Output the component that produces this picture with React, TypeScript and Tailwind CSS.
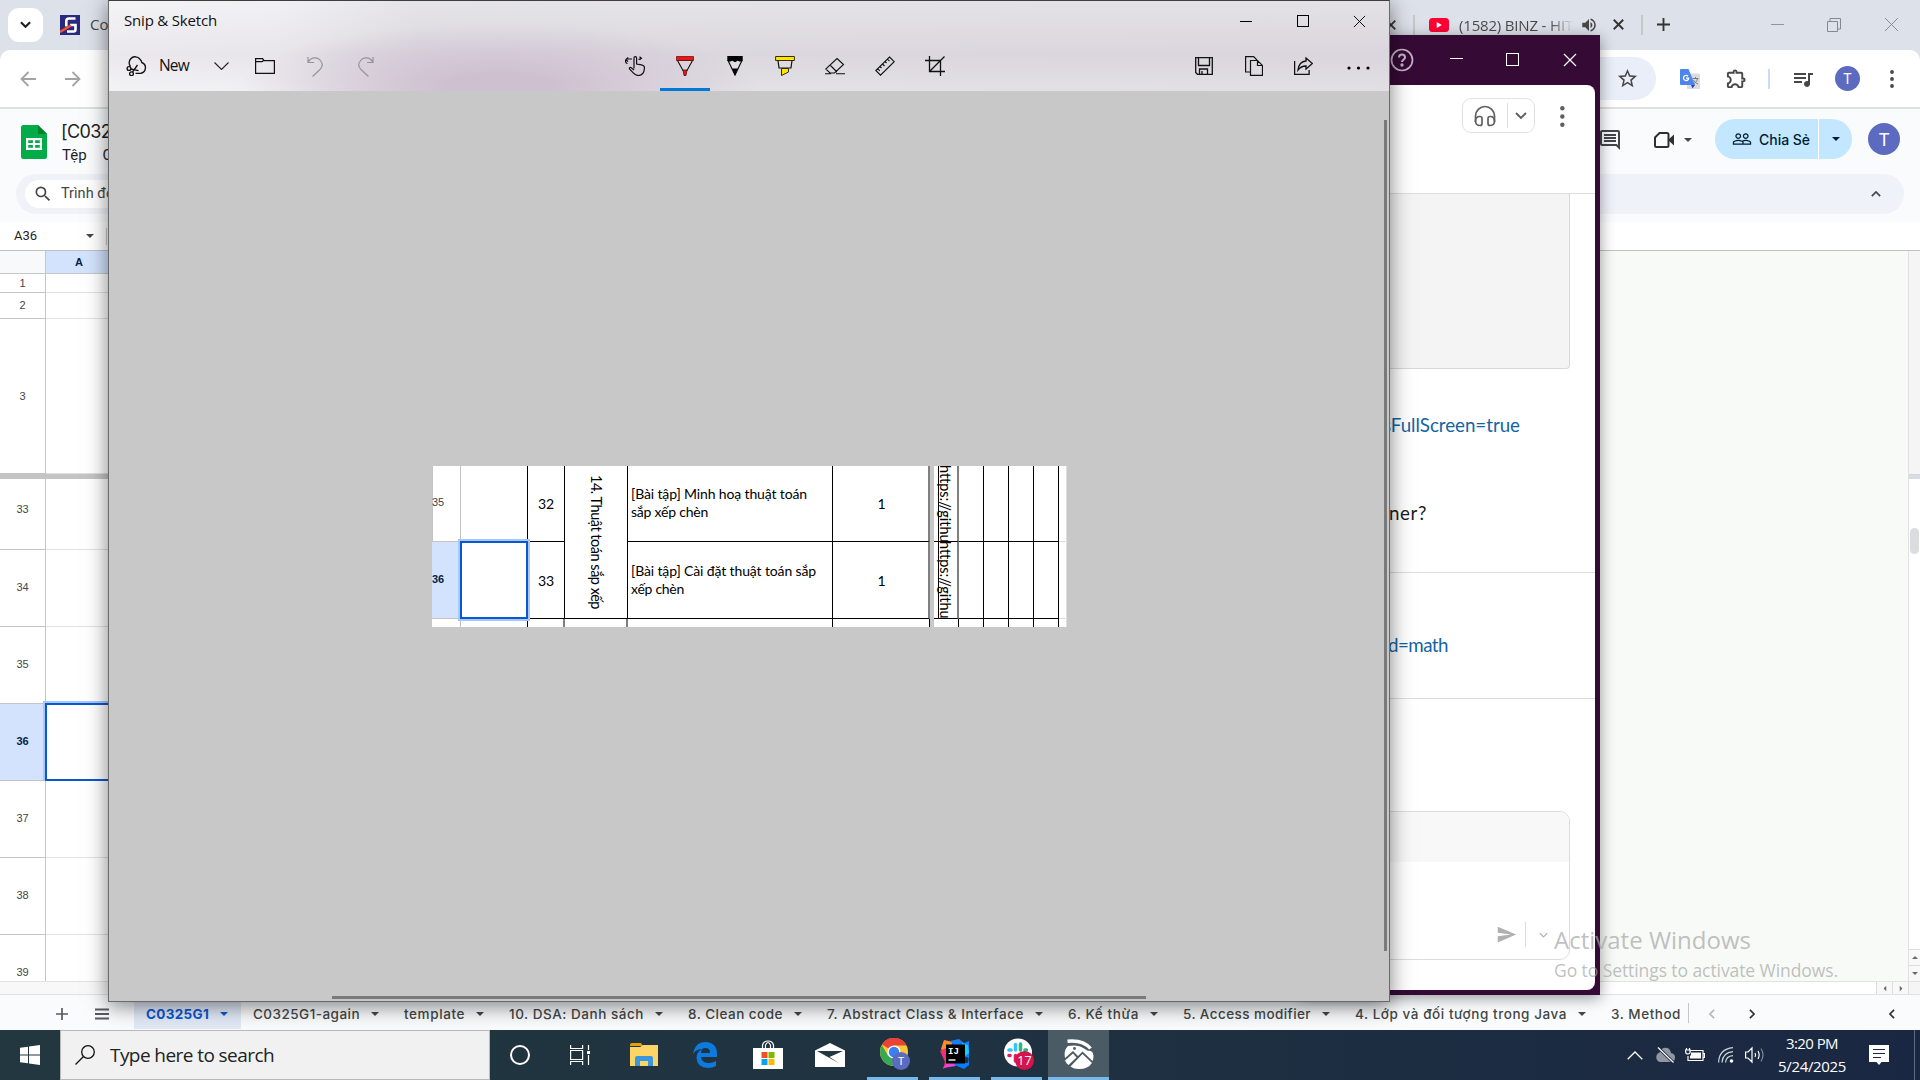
import React, { useLayoutEffect, useRef, useState } from 'react';
import { MdOutlineComment, MdOutlineStarBorder, MdOutlineExtension, MdOutlineQueueMusic, MdPeopleOutline, MdSend, MdVolumeUp, MdSearch } from 'react-icons/md';

/** Single-line text whose tracking is adjusted so that it fills `w` pixels. */
function Run({ w, className = '', children }: { w: number; className?: string; children: string }) {
  const ref = useRef<HTMLSpanElement>(null);
  const [spacing, setSpacing] = useState(0);
  useLayoutEffect(() => {
    const el = ref.current;
    if (el) setSpacing((w - el.getBoundingClientRect().width) / children.length);
  }, [w, children]);
  return (
    <span ref={ref} className={`inline-block shrink-0 whitespace-pre ${className}`} style={{ letterSpacing: `${spacing}px` }}>
      {children}
    </span>
  );
}

/** Vertical counterpart of Run: fills `h` pixels. */
function VRun({ h, children }: { h: number; children: string }) {
  const ref = useRef<HTMLSpanElement>(null);
  const [spacing, setSpacing] = useState(0);
  useLayoutEffect(() => {
    const el = ref.current;
    if (el) setSpacing((h - el.getBoundingClientRect().height) / children.length);
  }, [h, children]);
  return <span ref={ref} className="inline-block whitespace-pre" style={{ letterSpacing: `${spacing}px` }}>{children}</span>;
}

type P = { className?: string };
const Caret = ({ className = '' }: P) => (
  <svg viewBox="0 0 8 4" className={`h-1 w-2 shrink-0 ${className}`} fill="currentColor"><path d="M0 0h8L4 4z" /></svg>
);
const Chevron = ({ className = '', d = 'M1 1l5 5 5-5', vb = '0 0 12 7', sw = 2 }: P & { d?: string; vb?: string; sw?: number }) => (
  <svg viewBox={vb} className={`shrink-0 ${className}`} fill="none" stroke="currentColor" strokeWidth={sw}><path d={d} /></svg>
);
const Cross = ({ className = '', sw = 1 }: P & { sw?: number }) => (
  <svg viewBox="0 0 14 14" className={`shrink-0 ${className}`} fill="none" stroke="currentColor" strokeWidth={sw}><path d="M1 1l12 12M13 1L1 13" /></svg>
);
const Dots = ({ className = '' }: P) => (
  <svg viewBox="0 0 4 18" className={`h-[18px] w-1 shrink-0 ${className}`} fill="currentColor"><circle cx="2" cy="2" r="1.9" /><circle cx="2" cy="9" r="1.9" /><circle cx="2" cy="16" r="1.9" /></svg>
);

function TabStrip() {
  return (
    <div className="flex h-[50px] items-center bg-[#dde1e9] pb-px text-[#474747]">
      <div className="ml-2 flex h-[34px] w-[35px] shrink-0 items-center justify-center rounded-[11px] bg-white text-[#1f1f1f]">
        <Chevron className="h-[7px] w-[11px]" sw={2.3} />
      </div>
      <svg viewBox="0 0 20 20" className="ml-[17px] h-5 w-5 shrink-0">
        <rect width="20" height="20" fill="#29297f" />
        <path d="M15.500 3.500H9Q6.300 3.500 6.300 6v5.500M7 16.500h6.500q2 0 2-2V10H10" fill="none" stroke="#fff" strokeWidth="2.600" />
        <path d="M0 17L11 10.500" stroke="#f1562b" strokeWidth="2.400" />
      </svg>
      <span className="ml-2.5 w-6 shrink-0 whitespace-nowrap text-[15px]">Co</span>
      <Cross className="ml-[1272px] h-2.5 w-2.5 text-[#333]" sw={2.4} />
      <div className="ml-[17px] h-5 w-0.5 shrink-0 bg-[#c7c7c9]" />
      <svg viewBox="0 0 20 14" className="ml-[14px] h-3.5 w-5 shrink-0"><rect width="20" height="14" rx="3.500" fill="#f03" /><path d="M7.700 4v6l5.200-3z" fill="#fff" /></svg>
      <div className="ml-2.5 w-[114px] shrink-0 bg-gradient-to-r from-[#474747] from-80% to-transparent bg-clip-text text-transparent">
        <Run w={114} className="text-[15px]">(1582) BINZ - HIT</Run>
      </div>
      <MdVolumeUp className="ml-[7px] h-[18px] w-[18px] shrink-0" />
      <Cross className="ml-[15px] h-[11px] w-[11px] text-[#333]" sw={2.4} />
      <div className="ml-[17px] h-5 w-0.5 shrink-0 bg-[#c7c7c9]" />
      <svg viewBox="0 0 14 14" className="ml-[14px] h-[13px] w-[13px] shrink-0" stroke="#333" strokeWidth="2"><path d="M7 0v14M0 7h14" /></svg>
      <div className="ml-[101px] h-px w-[13px] shrink-0 bg-[#929499]" />
      <svg viewBox="0 0 14 14" className="ml-[43px] h-3.5 w-3.5 shrink-0" fill="none" stroke="#85888d"><path d="M.5 3.500h10v10H.5zM3 3V.5h10.500V11H11" /></svg>
      <Cross className="ml-[43px] h-[15px] w-[15px] text-[#85888d]" sw={0.9} />
    </div>
  );
}

function AddressBar() {
  return (
    <div className="bg-[#dde1e9]">
      <div className="flex h-[59px] items-center rounded-t-[10px] border-b-2 border-[#dfe1dd] bg-white text-[#474747]">
        <svg viewBox="0 0 16 16" className="ml-5 h-4 w-4 shrink-0" fill="none" stroke="#a3a3a3" strokeWidth="1.800"><path d="M16 8H1.500M8.500 1L1.500 8l7 7" /></svg>
        <svg viewBox="0 0 16 16" className="ml-[29px] h-4 w-4 shrink-0" fill="none" stroke="#a3a3a3" strokeWidth="1.800"><path d="M0 8h14.500M7.500 1l7 7-7 7" /></svg>
        <div className="ml-[119px] flex h-[43px] w-[1456px] shrink-0 items-center justify-end rounded-full bg-[#e9eef8] pr-[17px]">
          <MdOutlineStarBorder className="h-[23px] w-[23px]" />
        </div>
        <svg viewBox="0 0 20 20" className="ml-6 h-5 w-5 shrink-0">
          <rect x="7" y="4.500" width="13" height="15.500" rx="1" fill="#dcdcdc" />
          <path d="M1 0h7.500L15 16H1a1 1 0 01-1-1V1a1 1 0 011-1z" fill="#4a86ee" />
          <path d="M11 16h4l-2.500 3.500z" fill="#2149b8" />
          <path d="M8 7.200a2.600 2.600 0 10.700 1.900H6" fill="none" stroke="#fff" strokeWidth="1.300" />
          <path d="M12.500 9.500h6M15.500 8v1.500M17.500 9.500c-.5 3-2.500 4.500-4 5.500M13.500 11c1 2 3 3.500 4.500 4" fill="none" stroke="#6f7f8f" />
        </svg>
        <MdOutlineExtension className="ml-[25px] h-[23px] w-[23px] shrink-0" />
        <div className="ml-5 h-5 w-0.5 shrink-0 bg-[#c9dafc]" />
        <MdOutlineQueueMusic className="ml-[21px] h-[24px] w-[24px] shrink-0" />
        <div className="ml-5 flex h-[25px] w-[25px] shrink-0 items-center justify-center rounded-full bg-[#5c6bc0] font-['Roboto',sans-serif] text-sm text-white">T</div>
        <Dots className="ml-[30px]" />
      </div>
    </div>
  );
}

function SheetHeader() {
  return (
    <div className="h-[113px] bg-[#f9fbfd]">
      <div className="flex h-[65px] items-start">
        <svg viewBox="0 0 26 34" className="ml-[21px] mt-4 h-[34px] w-[26px] shrink-0">
          <path d="M2.500 0H17l9 9v22.500a2.500 2.500 0 01-2.500 2.500h-21A2.500 2.500 0 010 31.500v-29A2.500 2.500 0 012.500 0z" fill="#00ac47" />
          <path d="M17 0l9 9h-9z" fill="#00832d" />
          <path d="M5 13h16v12H5zm2.200 2.200v2.700h4.700v-2.700zm6.900 0v2.700h4.700v-2.700zm-6.900 4.900v2.700h4.700v-2.700zm6.900 0v2.700h4.700v-2.700z" fill="#fff" fillRule="evenodd" />
        </svg>
        <div className="ml-3.5 mt-[11px] w-[60px] shrink-0 whitespace-nowrap font-['Inter',sans-serif] text-[#1f1f1f]">
          <Run w={50} className="text-[18px] leading-[24px]">[C032</Run>
          <div className="-mt-px flex gap-4 pl-px font-['Roboto',sans-serif] text-[15px] leading-[24px]"><span>Tệp</span><span>C</span></div>
        </div>
        <MdOutlineComment className="ml-[1477px] mt-[19px] h-6 w-6 shrink-0 text-[#444746]" />
        <svg viewBox="0 0 20 16" className="ml-[32px] mt-[23px] h-4 w-5 shrink-0 text-[#303030]"><path d="M5.500 1H13a1.500 1.500 0 011.500 1.500v11A1.500 1.500 0 0113 15H2.500A1.500 1.500 0 011 13.500v-8z" fill="none" stroke="currentColor" strokeWidth="2" /><path d="M14 8l6-5.500v11z" fill="currentColor" /></svg>
        <Caret className="ml-2.5 mt-[29px] text-[#444746]" />
        <div className="ml-[23px] mt-2.5 flex h-10 w-[104px] shrink-0 items-center rounded-l-full border-r border-white bg-[#c2e7ff] pl-[17px] text-[#001d35]">
          <MdPeopleOutline className="h-5 w-5" />
          <Run w={51} className="ml-[7px] font-['Inter',sans-serif] text-[14px] font-medium">Chia Sẻ</Run>
        </div>
        <div className="mt-2.5 flex h-10 w-[33px] shrink-0 items-center justify-center rounded-r-full bg-[#c2e7ff] text-[#001d35]"><Caret /></div>
        <div className="ml-4 mt-3.5 flex h-8 w-8 shrink-0 items-center justify-center rounded-full bg-[#5c6bc0] font-['Roboto',sans-serif] text-[18px] text-white">T</div>
      </div>
      <div className="mx-4 flex h-10 items-center justify-between rounded-full bg-[#eff3f9] pl-[9px] pr-[23px]">
        <div className="flex h-7 w-[200px] items-center rounded-full bg-white pl-2 text-[#444746]">
          <MdSearch className="h-5 w-5" />
          <span className="-mt-px ml-2 whitespace-nowrap font-['Roboto',sans-serif] text-[14.5px]">Trình đơn</span>
        </div>
        <Chevron className="h-1.5 w-2.5 text-[#444746]" d="M1 6l5-5 5 5" />
      </div>
    </div>
  );
}

const sheetRows: [string, string][] = [
  ['1', 'h-[19px]'], ['2', 'h-[26px]'], ['3', 'h-[155px]'], ['|', 'h-[5px]'],
  ['33', 'h-[71px]'], ['34', 'h-[77px]'], ['35', 'h-[77px]'], ['36', 'h-[77px]'],
  ['37', 'h-[77px]'], ['38', 'h-[77px]'], ['39', 'h-[77px]'],
];

function Grid() {
  return (
    <div className="flex h-[731px] border-b border-[#e1e3e1]">
      <div className="h-[730px] w-[200px] shrink-0 overflow-hidden font-['Liberation_Sans',sans-serif] text-[11px] text-[#444746]">
        <div className="flex h-[23px] border-b border-[#c4c7c5]">
          <div className="w-[46px] border-r border-[#c4c7c5] bg-[#f8f9fa]" />
          <div className="w-[66px] bg-[#d3e3fd] text-center font-bold leading-[23px] text-[#041e49]">A</div>
          <div className="grow bg-[#d3e3fd]" />
        </div>
        {sheetRows.map(([n, h]) =>
          n === '|' ? (
            <div key={n} className={`bg-[#c4c4c4] ${h}`} />
          ) : (
            <div key={n} className={`relative flex ${h}`}>
              <div className={`flex w-[46px] shrink-0 items-center justify-center border-b border-r border-[#c4c4c4] ${n === '36' ? 'bg-[#d3e3fd] font-bold text-[#041e49]' : 'bg-white'} ${n === '39' ? 'pb-0.5' : n === '33' ? 'pb-[9px]' : n.length > 1 ? 'pb-px' : ''}`}>{n}</div>
              <div className="grow border-b border-[#e1e1e1] bg-white" />
              {n === '36' && <div className="absolute -bottom-0.5 -top-[3px] left-[43px] w-[120px] border-2 border-[#a8c7fa]"><div className="h-full border-2 border-[#0b57d0]" /></div>}
            </div>
          ),
        )}
      </div>
      <div className="grow bg-[#f8faf7]" />
      <div className="flex w-3 shrink-0 flex-col border-l border-[#e1e1e1] bg-white text-[#6b6b6b]">
        <div className="h-[223px] bg-[#f5f5f5]" />
        <div className="h-[5px] border-t border-[#d5d5d5] bg-[#dadce4]" />
        <div className="mx-px mt-[49px] h-[26px] rounded-full bg-[#dadce0]" />
        <div className="mt-auto flex h-4 items-center justify-center border-t border-[#ddd] bg-[#f8f8f8]"><Caret className="h-[3px] w-1.5 rotate-180" /></div>
        <div className="flex h-4 items-center justify-center border-t border-[#ddd] bg-[#f8f8f8]"><Caret className="h-[3px] w-1.5" /></div>
      </div>
    </div>
  );
}

const tabs: [string, number][] = [
  ['C0325G1', 63], ['C0325G1-again', 107], ['template', 61], ['10. DSA: Danh sách', 135], ['8. Clean code', 95],
  ['7. Abstract Class & Interface', 197], ['6. Kế thừa', 71], ['5. Access modifier', 128], ['4. Lớp và đối tượng trong Java', 212],
];

function SheetTabs() {
  return (
    <div className="flex h-[35px] items-center bg-[#f9fbfd] pb-px font-['Inter',sans-serif] text-[13.5px] font-medium text-[#444746]">
      <svg viewBox="0 0 12 12" className="ml-14 mt-1 h-3 w-3 shrink-0" stroke="#575b5f" strokeWidth="1.700"><path d="M6 0v12M0 6h12" /></svg>
      <svg viewBox="0 0 14 12" className="ml-[27px] mt-1 h-3 w-3.5 shrink-0" stroke="#575b5f" strokeWidth="1.900"><path d="M0 1.500h14M0 6h14M0 10.500h14" /></svg>
      <div className="ml-[25px] flex h-full shrink-0">
        {tabs.map(([t, w], i) => (
          <div key={t} className={`flex items-center pl-3 pr-3 pt-1 ${i === 0 ? 'bg-[#e1e9f7] font-bold text-[#0b57d0]' : ''}`}>
            <Run w={w}>{t}</Run>
            <Caret className="ml-[11px] mr-px" />
          </div>
        ))}
        <div className="flex items-center pl-3 pt-1"><Run w={70}>3. Method</Run></div>
      </div>
      <div className="ml-[7px] mt-0.5 h-5 w-px bg-[#c4c7c5]" />
      <Chevron className="ml-5 mt-1 h-2.5 w-1.5 text-[#b4b7ba]" vb="0 0 7 12" d="M6 1L1 6l5 5" />
      <Chevron className="ml-[34px] mt-1 h-2.5 w-1.5 text-[#303030]" vb="0 0 7 12" d="M1 1l5 5-5 5" />
      <Chevron className="ml-auto mr-[25px] mt-1 h-2.5 w-1.5 text-[#303030]" vb="0 0 7 12" d="M6 1L1 6l5 5" />
    </div>
  );
}

function Browser() {
  return (
    <div className="flex h-[1030px] w-[1920px] flex-col overflow-hidden bg-white">
      <TabStrip />
      <AddressBar />
      <SheetHeader />
      <div className="flex h-[29px] shrink-0 items-center border-b border-[#c0c2c0] bg-white pl-3.5">
        <Run w={23} className="font-['Roboto',sans-serif] text-[13px] text-[#1f1f1f]">A36</Run>
        <Caret className="ml-[49px] text-[#444746]" />
        <div className="ml-3 h-[17px] w-px bg-[#c4c7c5]" />
      </div>
      <Grid />
      <div className="flex h-[13px] shrink-0 items-stretch border-b border-[#e1e3e1] bg-white text-[#6b6b6b]">
        <div className="w-[200px] bg-[#f8f8f8]" />
        <div className="ml-auto flex w-4 items-center justify-center border-l border-[#ddd] bg-[#f8f8f8]"><Caret className="h-[3px] w-1.5 rotate-90" /></div>
        <div className="flex w-4 items-center justify-center border-l border-[#ddd] bg-[#f8f8f8]"><Caret className="h-[3px] w-1.5 -rotate-90" /></div>
        <div className="w-[12px] border-l border-[#ddd] bg-[#f5f5f5]" />
      </div>
      <SheetTabs />
    </div>
  );
}

function ChatWindow() {
  return (
    <div className="absolute left-[1300px] top-[35px] flex h-[960px] w-[300px] flex-col bg-[#350a35] shadow-[0_3px_14px_rgba(0,0,0,0.4)]">
      <div className="flex h-[50px] shrink-0 items-center pb-px pl-[90px] text-white">
        <svg viewBox="0 0 24 24" className="h-6 w-6 text-[#c4b3c6]" fill="none" stroke="currentColor" strokeWidth="1.700"><circle cx="12" cy="12" r="10.500" /><path d="M9 9.500a3 3 0 116 0c0 2-3 2-3 4.500" strokeWidth="2" /><circle cx="12" cy="17" r=".8" fill="currentColor" /></svg>
        <div className="ml-9 h-px w-[13px] -translate-y-px bg-white" />
        <div className="ml-[43px] h-[13px] w-[13px] border border-white" />
        <Cross className="ml-11 h-3.5 w-3.5" sw={1.2} />
      </div>
      <div className="mr-[5px] flex h-[905px] flex-col overflow-hidden rounded-br-lg rounded-tr-lg bg-white">
        <div className="flex h-[109px] shrink-0 items-start border-b border-[#ddd] pl-[162px] pt-[13px] text-[#616061]">
          <div className="flex h-[35px] w-[73px] items-center rounded-[9px] border border-[#e2e2e2] pl-[11px]">
            <svg viewBox="0 0 22 22" className="h-[22px] w-[22px]" fill="none" stroke="currentColor" strokeWidth="1.700"><path d="M1.500 17v-6a9.500 9.500 0 0119 0v6" /><path d="M5.500 11.500h.5q2 0 2 2v5q0 2-2 2-4 0-4.500-4 0-5 4-5zM16.500 11.500H16q-2 0-2 2v5q0 2 2 2 4 0 4.500-4 0-5-4-5z" /></svg>
            <div className="ml-[11px] h-[25px] w-px bg-[#ddd]" />
            <Chevron className="ml-[7px] h-[7px] w-3" sw={1.9} />
          </div>
          <Dots className="ml-[25px] mt-[8px] h-[21px] w-[4.7px]" />
        </div>
        <div className="h-[175px] w-[270px] shrink-0 rounded-br border-b border-r border-[#d8d8d8] bg-[#f4f4f4]" />
        <div className="flex h-[204px] shrink-0 flex-col items-start border-b border-[#ddd] pt-[43px] font-['Lato',sans-serif] text-[18.75px] leading-[26px]">
          <div className="ml-[83px] text-[#1264a3]"><Run w={137}>sFullScreen=true</Run></div>
          <div className="ml-[78px] mt-[62px] text-[#1d1c1d]"><Run w={49}>nner?</Run></div>
        </div>
        <div className="h-[126px] shrink-0 border-b border-[#ddd] pt-[59px] font-['Lato',sans-serif] text-[18.75px] leading-[26px] text-[#1264a3]">
          <Run w={60} className="ml-[88px]">d=math</Run>
        </div>
        <div className="mt-[112px] h-[149px] w-[270px] shrink-0 overflow-hidden rounded-[10px] border border-[#ddd]">
          <div className="h-[50px] bg-[#f8f8f8]" />
          <div className="flex items-center pl-[195px] pt-[60px] text-[#b0b0b0]">
            <MdSend className="h-[21px] w-[21px]" />
            <div className="ml-2 h-[25px] w-px bg-[#ddd]" />
            <Chevron className="ml-[13px] h-1.5 w-[9px]" sw={1.6} />
          </div>
        </div>
      </div>
    </div>
  );
}

const ic = { fill: 'none', stroke: '#111', strokeWidth: 1.1 } as const;

function SnipBar() {
  return (
    <div className="flex h-[90px] shrink-0 flex-col bg-[radial-gradient(ellipse_260px_62px_at_390px_85px,#cfc0d0_20%,transparent_100%),linear-gradient(to_bottom,rgba(255,255,255,0.15),rgba(190,165,190,0.12)_60%,rgba(255,255,255,0.1)),linear-gradient(to_right,#f1f1f3_0%,#eeeef1_13%,#e0dfe4_24%,#dedce1_100%)]">
      <div className="flex h-[40px] items-center pl-[15px]">
        <Run w={93} className="-mt-0.5 text-[15px] leading-5 text-[#111]">Snip &amp; Sketch</Run>
        <div className="ml-auto h-px w-3 bg-black" />
        <div className="ml-[45px] h-3 w-3 border border-black" />
        <Cross className="ml-[44px] mr-[23px] h-[13px] w-[13px] text-black" />
      </div>
      <div className="flex h-[50px] items-center">
        <svg viewBox="0 0 22 20" className="ml-[17px] h-5 w-[22px]" {...ic} strokeWidth="1.350"><path d="M4.500 10.500A5.800 5.800 0 0113.800 3a6 6 0 012 3.500 5.600 5.600 0 01-1.300 10.800H9.500" /><circle cx="3" cy="12.500" r="1.900" /><circle cx="5.500" cy="17.800" r="1.900" /><path d="M4.800 13l7.700 1.700M6.500 16.200L11.500 9" /></svg>
        <Run w={30} className="ml-[11px] text-[15.5px] text-[#111]">New</Run>
        <Chevron className="ml-[25px] h-2 w-[15px] text-[#222]" vb="0 0 15 8" d="M.5.5l7 7 7-7" sw={1.1} />
        <svg viewBox="0 0 20 16" className="ml-[26px] h-4 w-5" {...ic}><path d="M.6.6h7l1.500 2H19.400V15.400H.6zM.6 3.600h6.500l1.500-1" strokeWidth="1.200" /></svg>
        <svg viewBox="0 0 17 21" className="ml-8 h-[21px] w-[17px]" fill="none" stroke="#97939b" strokeWidth="1.200"><path d="M1 1v5.500h6M1.500 6A7 7 0 0114 5.500q3 4-1 8L5.500 20.500" /></svg>
        <svg viewBox="0 0 17 21" className="ml-[33px] h-[21px] w-[17px]" fill="none" stroke="#97939b" strokeWidth="1.200"><path d="M16 1v5.500h-6M15.500 6A7 7 0 003 5.500q-3 4 1 8l7.500 7" /></svg>
        <svg viewBox="0 0 20 20" className="ml-[251px] h-5 w-5" {...ic} strokeWidth="1.200"><path d="M9 12.500V2Q9 .7 10.300.7T11.600 2v6l5 .8q2.900.6 2.900 3-.4 7.500-6 7.700-3 0-5-2.300L4.500 13q-.5-2 1.500-1.500l3 2.500M7 3H2Q.5 3 .5 5t2 2.500M3.200 1.500L1 3.500l2 2.200M14.500.7l2 1.500-2 1.600M13.500 3.500l3-1.300" /></svg>
        <div className="ml-[15px] flex h-[50px] w-[50px] flex-col items-center border-b-[3px] border-[#0078d7] pt-[15px]">
          <svg viewBox="0 0 18 20" className="h-5 w-[18px]"><path d="M1.500 4.500L7 14.500h4L16.500 4.500z" fill="none" stroke="#111" strokeWidth="1.100" /><path d="M.5.5h17v4H.5z" fill="#e81717" stroke="#7a1010" strokeWidth=".8" /><path d="M7 14h4l-1 5.500H8z" fill="#e81717" stroke="#400" strokeWidth=".7" /></svg>
        </div>
        <svg viewBox="0 0 16 20" className="ml-[17px] h-5 w-4"><path d="M.8 4L8 19l7.200-15" fill="#e2dfe4" stroke="#111" strokeWidth="1.200" /><path d="M.3 0h15.400v4.800l-2.500 1-2.500-1-2.700 1.400-2.700-1.400-2.500 1-2.500-1zM5 12.500h6L8 19.500z" fill="#000" /></svg>
        <svg viewBox="0 0 20 20" className="ml-[32px] h-5 w-5"><path d="M.6.5h18.800v4H.6z" fill="#ffe600" stroke="#332d00" /><path d="M3 4.500l1 7.500h12l1-7.500" fill="none" stroke="#111" strokeWidth="1.200" /><path d="M6.500 12.500h7v3.500l-7 3.500z" fill="#ffe600" stroke="#332d00" /></svg>
        <svg viewBox="0 0 20 18" className="ml-[30px] h-[18px] w-5" {...ic}><path d="M12 1.500l6.500 6-9 8.500H5l-4.300-4zM5 8l7 7M0 16.800h6M11 16.800h9" /></svg>
        <svg viewBox="0 0 20 20" className="ml-[30px] h-5 w-5" {...ic}><path d="M14.500 1L19.200 5.700 5.500 19.200.8 14.500zM12.500 3.200l2 2M10 5.500l1.500 1.500M7.500 8l2 2M5 10.500l1.500 1.500M2.800 12.800l2 2" /></svg>
        <svg viewBox="0 0 20 20" className="ml-[30px] h-5 w-5" {...ic} strokeWidth="1.300"><path d="M0 4.500h15.500V20M4.500 0v15.500H20M4.500 15.500L19.500.5" /></svg>
        <svg viewBox="0 0 18 18" className="ml-[250px] h-[18px] w-[18px]" {...ic} strokeWidth="1.300"><path d="M.7.7h16.600v16.600H2.500L.7 15.500zM3.500.7v7.800h11V.7M4.500 17v-5h8v5M7 14v3" /></svg>
        <svg viewBox="0 0 18 20" className="ml-8 h-5 w-[18px]" {...ic}><path d="M5.500 16H.6V.6h8L12 4M5.500 4.500h7l5 5V19.400h-12zM12.500 4.500v5h5" strokeWidth="1.200" /></svg>
        <svg viewBox="0 0 19 18" className="ml-[31px] h-[18px] w-[19px]" {...ic}><path d="M.6 4v13.400h14.500V13M12 1l6.400 5.500L12 12V9Q7 9 4 13q1-8.500 8-9z" strokeWidth="1.300" /></svg>
        <svg viewBox="0 0 23 4" className="ml-[34px] mt-[3px] h-1 w-[23px]"><circle cx="2" cy="2" r="1.600" /><circle cx="11.500" cy="2" r="1.600" /><circle cx="21" cy="2" r="1.600" /></svg>
      </div>
    </div>
  );
}

function Capture() {
  const rows = [
    { n: '35', order: '32', text: ['[Bài tập] Minh hoạ thuật toán', 'sắp xếp chèn'], widths: [176, 77] },
    { n: '36', order: '33', text: ['[Bài tập] Cài đặt thuật toán sắp', 'xếp chèn'], widths: [185, 53] },
  ];
  return (
    <div className="relative grid h-[161px] w-[635px] grid-cols-[29px_67px_37px_63px_205px_97px_4px_5px_20px_25px_25px_25px_25px_8px] grid-rows-[76px_77px_8px] overflow-hidden bg-white font-['Lato',sans-serif] text-[14px] text-black">
      {rows.map((r, i) => (
        <React.Fragment key={r.n}>
          <div className={`flex items-center border-b border-r border-[#c4c4c4] font-['Liberation_Sans',sans-serif] text-[11px] ${i ? 'bg-[#d3e3fd] pb-0.5 font-bold text-[#041e49]' : 'border-l pb-[3px] text-[#444]'}`}>
            <span className={i ? '' : '-ml-px'}>{r.n}</span>
          </div>
          <div className="border-b border-r border-b-[#c4c4c4] border-r-black" />
          <div className="flex items-center justify-center border-b border-r border-black">{r.order}</div>
          {i === 0 && (
            <div className="row-span-2 border-b border-r border-black pl-[21px] pt-[9px]">
              <div className="flex w-5 text-[14.5px] leading-5 [writing-mode:vertical-rl]"><VRun h={134}>14. Thuật toán sắp xếp</VRun></div>
            </div>
          )}
          <div className={`flex flex-col items-start justify-center border-b border-r border-black pl-[3px] leading-[18px] ${i ? '' : 'pb-0.5'}`}>
            {r.text.map((t, k) => <Run key={t} w={r.widths[k]}>{t}</Run>)}
          </div>
          <div className="flex items-center justify-center border-b border-r-2 border-b-black border-r-[#808080] pl-0.5">1</div>
          <div className="bg-[#c8c8c8]" />
          <div className="border-b border-r border-black" />
          <div className="relative border-b border-r-2 border-b-black border-r-[#808080]">
            <div className="absolute -left-1 -top-px w-5 text-[14.5px] leading-5 [writing-mode:vertical-rl]"><VRun h={77}>https://githu</VRun></div>
          </div>
          <div className="border-b border-r border-black" /><div className="border-b border-r border-black" /><div className="border-b border-r border-black" /><div className="border-b border-r border-black" />
          <div className="border-b border-r border-[#ddd]" />
        </React.Fragment>
      ))}
      <div className="border-r border-[#c4c4c4]" />
      <div className="border-r border-black" />
      <div className="border-r-2 border-[#808080]" />
      <div className="border-r-2 border-[#808080]" />
      <div className="border-r border-black" />
      <div className="border-r border-black" />
      <div className="bg-[#c8c8c8]" />
      <div />
      <div className="border-r border-black" /><div className="border-r border-black" /><div className="border-r border-black" /><div className="border-r border-black" /><div className="border-r border-black" />
      <div className="border-r border-[#ddd]" />
      <div className="absolute left-[26px] top-[73px] h-[82px] w-[72px] border-2 border-[#a8c7fa]"><div className="h-full border-2 border-[#0b57d0] bg-white" /></div>
    </div>
  );
}

function SnipWindow() {
  return (
    <div className="absolute left-[108px] top-0 flex h-[1002px] w-[1282px] flex-col border border-[#6a6a6c] border-t-[#3f3c42] bg-[#c8c8c8] shadow-[0_4px_20px_rgba(0,0,0,0.5)]">
      <SnipBar />
      <div className="flex grow">
        <div className="flex grow flex-col pl-[323px] pt-[375px]">
          <Capture />
          <div className="-ml-[100px] mb-[2px] mt-auto h-[3px] w-[814px] bg-[#7a7a7a]" />
        </div>
        <div className="mr-[2px] mt-[29px] h-[831px] w-[3px] bg-[#7a7a7a]" />
      </div>
    </div>
  );
}

function Taskbar() {
  return (
    <div className="flex h-[50px] w-[1920px] items-center bg-gradient-to-r from-[#22373f] via-[#1f3241] to-[#1a2742] text-white">
      <svg viewBox="0 0 20 20" className="ml-5 h-5 w-5 shrink-0" fill="#fff"><path d="M0 2.800L8 1.700v7.800H0zM9 1.500L20 0v9.500H9zM0 10.500h8v7.800l-8-1.100zM9 10.500h11V20L9 18.500z" /></svg>
      <div className="ml-5 flex h-[50px] w-[430px] shrink-0 items-center border border-[#b8b8b8] bg-[#f1f1f1] pl-3.5 text-[#222]">
        <svg viewBox="0 0 20 20" className="h-5 w-5" fill="none" stroke="#111" strokeWidth="1.300"><circle cx="13" cy="7" r="6.300" /><path d="M8.500 11.500L.5 19.500" /></svg>
        <Run w={164} className="ml-[15px] text-[19px]">Type here to search</Run>
      </div>
      <div className="ml-5 h-5 w-5 shrink-0 rounded-full border-[2.5px] border-white" />
      <svg viewBox="0 0 20 20" className="ml-10 h-5 w-5 shrink-0" fill="none" stroke="#fff" strokeWidth="1.200"><path d="M.6 0v3.500h12V0M.6 5.500h12v9H.6zM.6 20v-3.500h12V20M18.500 0v5M18.500 10v10" /><path d="M17 6h3v3h-3z" fill="#fff" stroke="none" /></svg>
      <svg viewBox="0 0 28 24" className="ml-10 h-6 w-7 shrink-0"><path d="M0 2Q0 0 2 0h9l2 3H0z" fill="#e3a008" /><path d="M0 4h10l3-2h15v21H0z" fill="#fdd466" /><path d="M5 23v-8q0-2 2-2h14q2 0 2 2v8h-5v-5h-8v5z" fill="#3b97dd" /></svg>
      <svg viewBox="0 0 24 26" className="ml-[35px] h-[26px] w-6 shrink-0"><path d="M0 12Q2 0 12.500 0 24 .5 24 12v3H8q.8 6 8 6 4 0 7-2v5q-3.500 2-8 2Q4 25.500 3.500 16 3.500 10 9 7 2.500 7.500 0 12zM8 11h9q0-5-4.500-5T8 11z" fill="#0c7ade" fillRule="evenodd" /></svg>
      <svg viewBox="0 0 30 30" className="ml-9 h-[30px] w-[30px] shrink-0"><path d="M9.500 9V5q1-4 5.500-4t5.500 4v4M12.500 9V5q2.500-5 5 0v4" fill="none" stroke="#fff" strokeWidth="1.200" /><path d="M0 8h30v21H0z" fill="#fff" /><path d="M8.500 12h6v6h-6z" fill="#f25022" /><path d="M15.500 12h6v6h-6z" fill="#7fba00" /><path d="M8.500 19h6v6h-6z" fill="#00a4ef" /><path d="M15.500 19h6v6h-6z" fill="#ffb900" /></svg>
      <svg viewBox="0 0 30 24" className="ml-8 h-6 w-[30px] shrink-0"><path d="M15 0l15 7.500V24H0V7.500z" fill="#fff" /><path d="M2 8h26L14.500 14 24.500 20.500z" fill="#22373f" /></svg>
      <div className="ml-[22px] flex h-[50px] w-[51px] shrink-0 items-center justify-center border-b-[3px] border-[#76b9ed]">
        <svg viewBox="0 0 32 32" className="ml-1 h-8 w-8 shrink-0"><circle cx="15" cy="14" r="14" fill="#fcc934" /><path d="M15 14L3 6.500A14 14 0 0127.500 7.500H15z" fill="#ea4335" /><path d="M2.900 7A14 14 0 0015 28l6-10.500-12.100-.1z" fill="#34a853" /><circle cx="15" cy="14" r="6.600" fill="#fff" /><circle cx="15" cy="14" r="5.200" fill="#3c7ff0" /><circle cx="22" cy="23" r="9" fill="#5c6bc0" /><text x="22" y="27" textAnchor="middle" fontSize="11" fill="#fff" fontFamily="Roboto">T</text></svg>
      </div>
      <div className="ml-[11px] flex h-[50px] w-[51px] shrink-0 items-center justify-center border-b-[3px] border-[#76b9ed]">
        <svg viewBox="0 0 30 30" className="h-[30px] w-[30px] shrink-0"><path d="M4 1l9 2-7 13-5-6z" fill="#fc8d2d" /><path d="M0 12l8-4 6 16-11 6 2-7z" fill="#f32d76" /><path d="M10 2l9-2 5 4 5-2v17l-6-2z" fill="#1c7cf2" /><path d="M22 4l6 2 1 8-5 4z" fill="#0cd0ff" /><path d="M10 24h18l1-8v10l-5 4z" fill="#087cfa" /><path d="M3 29l7-8 6 6z" fill="#f045d4" /><rect x="6" y="5.500" width="19" height="19" fill="#000" /><text x="8" y="14.500" fontSize="9" fontWeight="700" fill="#fff" fontFamily="Liberation Mono">IJ</text><path d="M8.500 21h7" stroke="#fff" strokeWidth="1.400" /></svg>
      </div>
      <div className="ml-[11px] flex h-[50px] w-[51px] shrink-0 items-center justify-center border-b-[3px] border-[#76b9ed]">
        <svg viewBox="0 0 32 32" className="ml-1 h-8 w-8 shrink-0"><circle cx="15" cy="14.500" r="14" fill="#fff" /><g strokeWidth="3.600" strokeLinecap="round"><path d="M12.500 6.500v5.500M6 12h2" stroke="#36c5f0" /><path d="M17.500 6v6M22 12h1.500" stroke="#2eb67d" /><path d="M12.500 17.500v5.500M6 17.500h1" stroke="#e01e5a" /><path d="M18 17.500h5" stroke="#ecb22e" /></g><circle cx="21.500" cy="22.500" r="9.500" fill="#d4154b" /><text x="21.500" y="27" textAnchor="middle" fontSize="12.500" fill="#fff" fontFamily="Open Sans">17</text></svg>
      </div>
      <div className="ml-1.5 flex h-[50px] w-[61px] shrink-0 items-center justify-center border-b-[3px] border-[#76b9ed] bg-[#4b5b65]">
        <svg viewBox="0 0 30 30" className="h-[30px] w-[30px] shrink-0">
          <path d="M3.500 2.200Q19 .5 26.500 9.500" fill="none" stroke="#fff" strokeWidth="3.400" />
          <path d="M4 7Q14 5 20 9.500 24 12.500 27 12 29.500 13.500 29.500 17q0 3-1 5L18.500 12.500 14 17 9 12 1 19Q-.5 11 4 7z" fill="#fff" />
          <circle cx="10.500" cy="9.500" r="1.400" fill="#4b5b65" />
          <path d="M9 14.500l3.500 4L4.500 26Q1.500 23.500 1 21.500zM18.500 15L28 24Q24 30 15 30q-5.500 0-8.500-2.500z" fill="#fff" />
        </svg>
      </div>
      <Chevron className="ml-[518px] h-[9px] w-4" vb="0 0 16 9" d="M.7 8.300L8 1l7.300 7.300" sw={1.3} />
      <svg viewBox="0 0 20 16" className="ml-3 h-4 w-5 shrink-0"><path d="M5 15a5 5 0 01-.5-9.500Q6 .8 10.500.8T16 6q4 .5 4 4.500T16 15z" fill="#8f97a3" /><path d="M2.500 0l16 15.500" stroke="#1d2b40" strokeWidth="3" /><path d="M3 .5L18.500 15.500" stroke="#fff" strokeWidth="1.200" /></svg>
      <svg viewBox="0 0 20 14" className="ml-2.5 h-3.5 w-5 shrink-0" fill="none" stroke="#fff" strokeWidth="1.200"><path d="M5 4.500V2.500h13v10H3V8M18.500 5.500h1v4h-1M1.500.0v2M4.500 0v2M.6 2h4.600v2Q5 6 3 6 .8 6 .6 4z" /><path d="M6 4.500h10v6H5V8l1-1z" fill="#fff" stroke="none" /></svg>
      <svg viewBox="0 0 16 16" className="ml-[13px] h-4 w-4 shrink-0" fill="none" stroke="#cfd5dc" strokeWidth="1.200"><path d="M.6 15.500Q1 2 15 .6M4 15.500Q4.500 5.500 15 4.600M7.500 15.500Q8 9 15 8.600" /><circle cx="13.500" cy="14" r="1.800" fill="#fff" stroke="none" /></svg>
      <svg viewBox="0 0 20 18" className="ml-[11px] h-[18px] w-5 shrink-0" fill="none" stroke="#fff" strokeWidth="1.200"><path d="M.6 6h2.400l4-4v14l-4-4H.6zM10 7q1.200 2 0 4M13 5q2.300 4 0 8" /><path d="M16 2.500q4 6.500 0 13" stroke="#7c8799" /></svg>
      <div className="ml-[12px] flex w-[70px] shrink-0 flex-col items-center text-[15px] leading-[23px]">
        <Run w={52}>3:20 PM</Run>
        <Run w={68}>5/24/2025</Run>
      </div>
      <svg viewBox="0 0 20 20" className="ml-[22px] h-5 w-5 shrink-0"><path d="M0 0h20v17h-7.500L10 20l-2.500-3H0z" fill="#fff" /><path d="M4 4.500h12M4 8.500h12M4 12.500h8" stroke="#1b2840" strokeWidth="1.200" /></svg>
      <div className="ml-[25px] h-[50px] w-px bg-[#5f6a7d]" />
    </div>
  );
}

export default function App() {
  return (
    <div className="relative h-[1080px] w-[1920px] overflow-hidden font-['Open_Sans','Noto_Sans',sans-serif]">
      <Browser />
      <ChatWindow />
      <SnipWindow />
      <div className="absolute left-[1554px] top-[922px] flex flex-col items-start text-[#a3a5a3]/70">
        <Run w={197} className="text-[24px] leading-9">Activate Windows</Run>
        <Run w={284} className="text-[17.5px] leading-[24px]">Go to Settings to activate Windows.</Run>
      </div>
      <div className="relative"><Taskbar /></div>
    </div>
  );
}
